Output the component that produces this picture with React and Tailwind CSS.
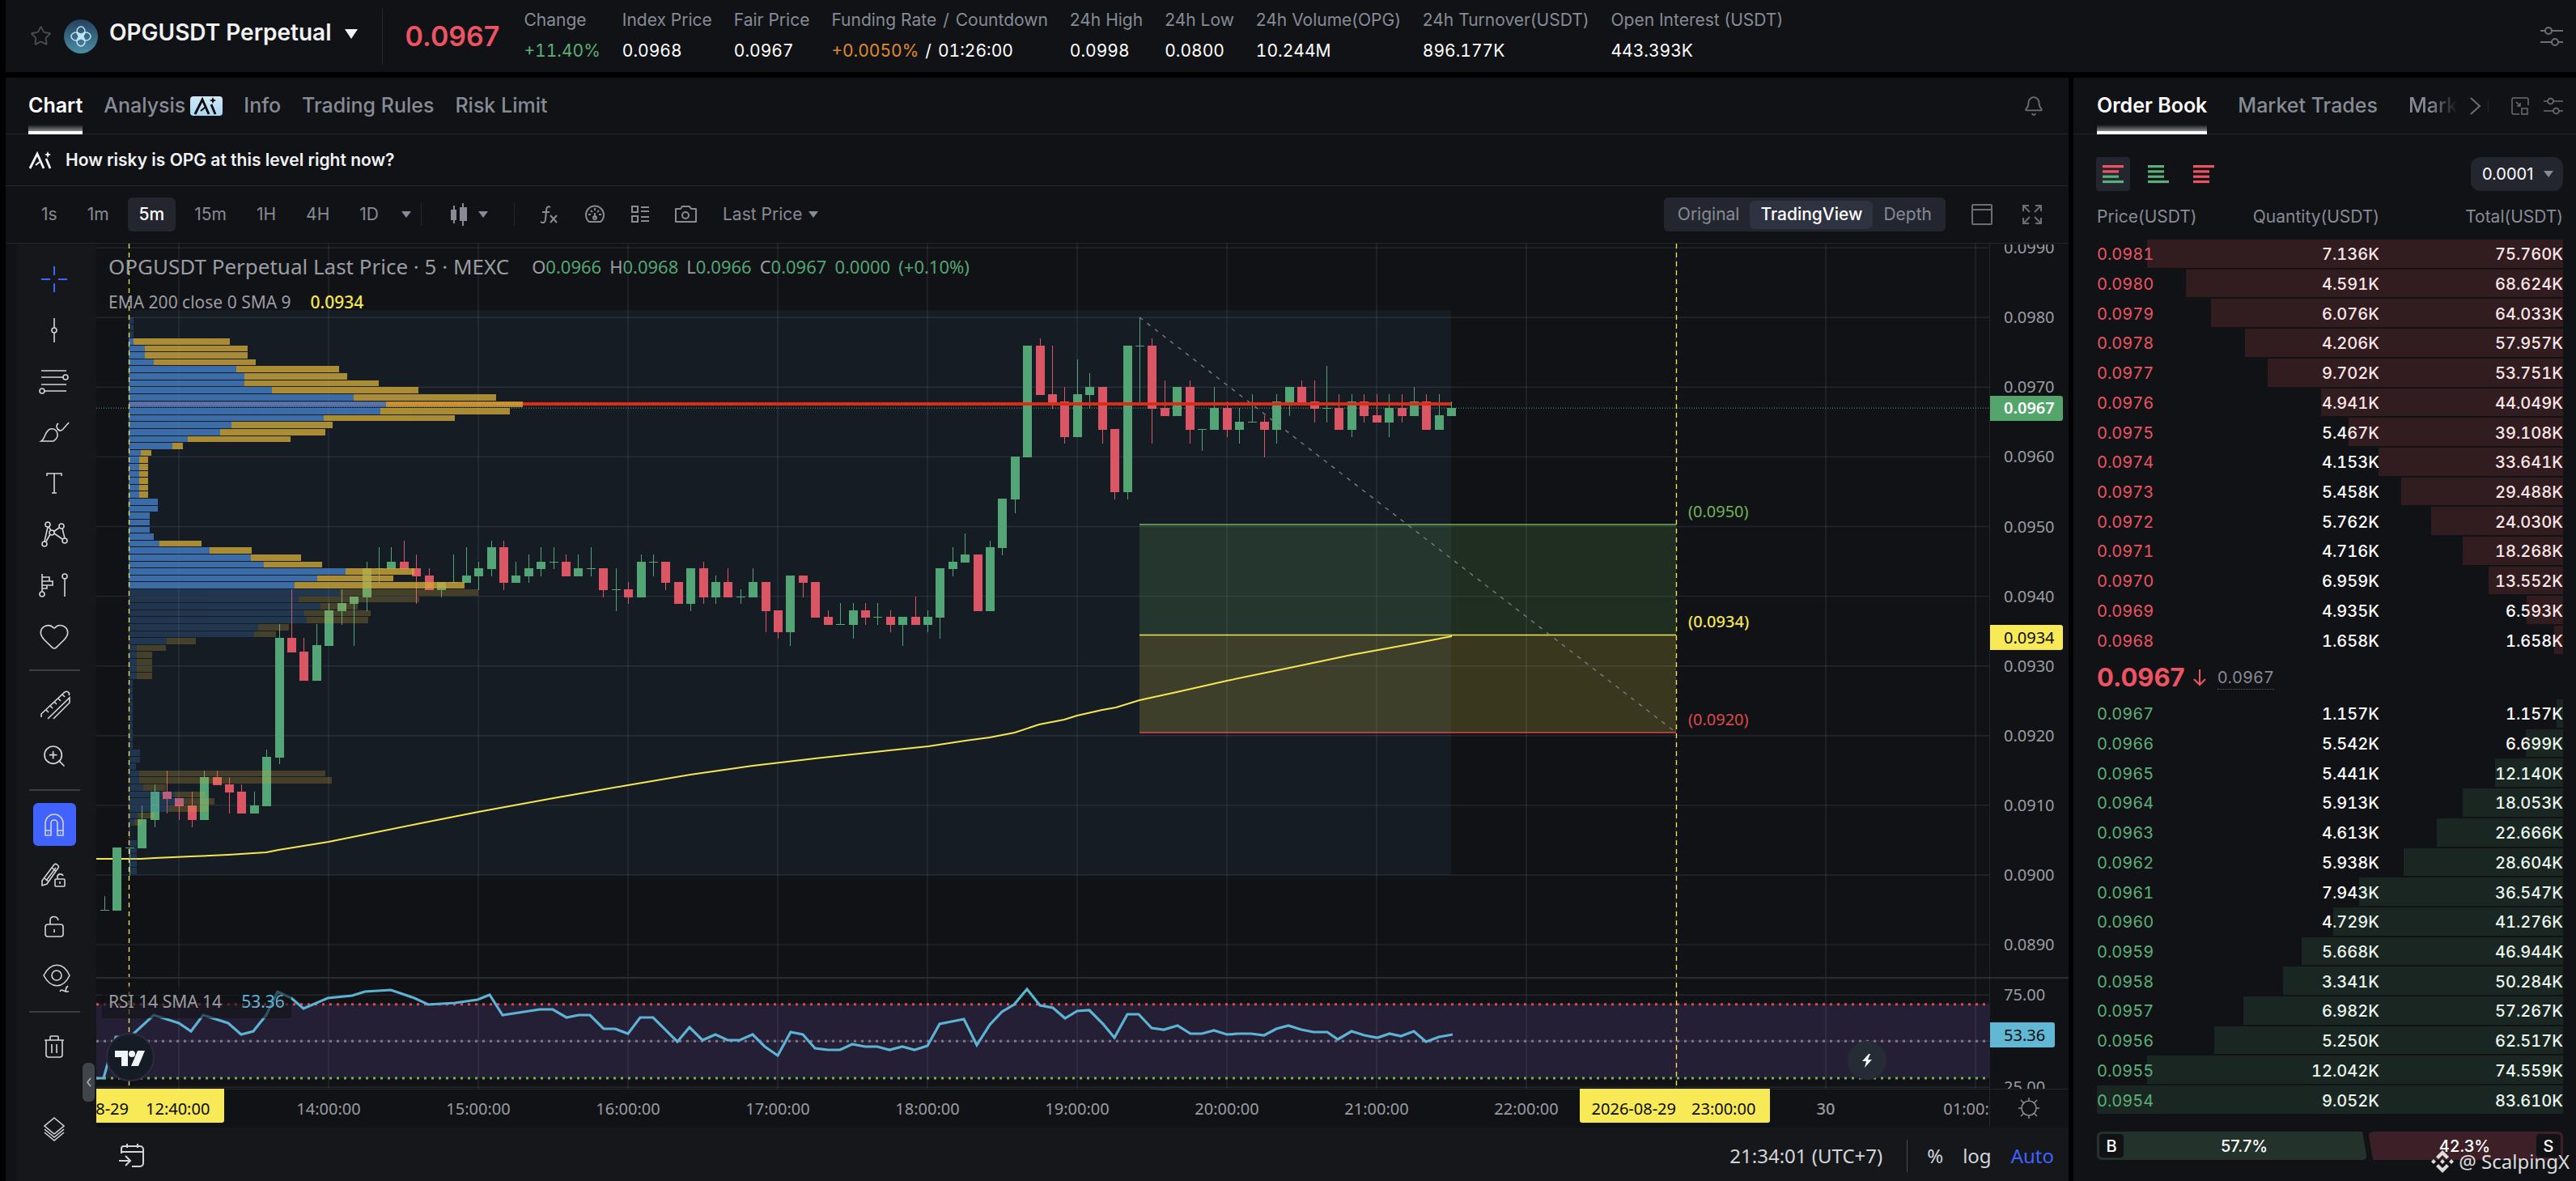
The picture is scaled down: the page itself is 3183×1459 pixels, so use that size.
import React, { useState } from 'react';
import { Bell, Heart, Star, ZoomIn } from 'lucide-react';

const stats = [
  { label: 'Change', value: '+11.40%', color: 'text-[#5ab078]' },
  { label: 'Index Price', value: '0.0968', color: 'text-white' },
  { label: 'Fair Price', value: '0.0967', color: 'text-white' },
  { label: 'Funding Rate', label2: 'Countdown', value: '+0.0050%', value2: '01:26:00', color: 'text-[#e08a2c]' },
  { label: '24h High', value: '0.0998', color: 'text-white' },
  { label: '24h Low', value: '0.0800', color: 'text-white' },
  { label: '24h Volume(OPG)', value: '10.244M', color: 'text-white' },
  { label: '24h Turnover(USDT)', value: '896.177K', color: 'text-white' },
  { label: 'Open Interest (USDT)', value: '443.393K', color: 'text-white' },
];

// [price, quantity, total]
const asks = [
  ['0.0981', '7.136K', '75.760K'],
  ['0.0980', '4.591K', '68.624K'],
  ['0.0979', '6.076K', '64.033K'],
  ['0.0978', '4.206K', '57.957K'],
  ['0.0977', '9.702K', '53.751K'],
  ['0.0976', '4.941K', '44.049K'],
  ['0.0975', '5.467K', '39.108K'],
  ['0.0974', '4.153K', '33.641K'],
  ['0.0973', '5.458K', '29.488K'],
  ['0.0972', '5.762K', '24.030K'],
  ['0.0971', '4.716K', '18.268K'],
  ['0.0970', '6.959K', '13.552K'],
  ['0.0969', '4.935K', '6.593K'],
  ['0.0968', '1.658K', '1.658K'],
];

const bids = [
  ['0.0967', '1.157K', '1.157K'],
  ['0.0966', '5.542K', '6.699K'],
  ['0.0965', '5.441K', '12.140K'],
  ['0.0964', '5.913K', '18.053K'],
  ['0.0963', '4.613K', '22.666K'],
  ['0.0962', '5.938K', '28.604K'],
  ['0.0961', '7.943K', '36.547K'],
  ['0.0960', '4.729K', '41.276K'],
  ['0.0959', '5.668K', '46.944K'],
  ['0.0958', '3.341K', '50.284K'],
  ['0.0957', '6.982K', '57.267K'],
  ['0.0956', '5.250K', '62.517K'],
  ['0.0955', '12.042K', '74.559K'],
  ['0.0954', '9.052K', '83.610K'],
];

// 5m candles from 12:30, in ticks of 0.0001: [open, high, low, close]
const candles = [
  [895, 897, 895, 895], [895, 904, 895, 904], [904, 904, 900, 904], [904, 910, 904, 908],
  [908, 913, 907, 912], [912, 915, 909, 911], [911, 911, 908, 910], [910, 912, 907, 908],
  [908, 915, 908, 914], [914, 915, 913, 913], [913, 914, 909, 912], [912, 913, 909, 909],
  [909, 912, 909, 910], [910, 918, 910, 917], [917, 936, 916, 934], [934, 941, 932, 932],
  [932, 934, 928, 928], [928, 936, 928, 933], [933, 939, 933, 938], [938, 941, 936, 939],
  [939, 940, 933, 940], [940, 945, 938, 944], [944, 947, 942, 944], [944, 947, 944, 945],
  [945, 948, 944, 944], [944, 946, 939, 943], [943, 944, 941, 941], [941, 942, 940, 942],
  [942, 946, 942, 942], [942, 947, 942, 943], [943, 945, 941, 944], [944, 948, 943, 947],
  [947, 948, 941, 942], [942, 945, 942, 943], [943, 946, 942, 944], [944, 947, 943, 945],
  [945, 947, 944, 945], [945, 946, 943, 943], [943, 946, 943, 944], [944, 947, 943, 944],
  [944, 944, 940, 941], [941, 944, 938, 941], [941, 942, 939, 940], [940, 946, 940, 945],
  [945, 946, 943, 945], [945, 945, 941, 942], [942, 942, 939, 939], [939, 944, 938, 944],
  [944, 945, 939, 940], [940, 943, 939, 942], [942, 944, 940, 940], [940, 941, 939, 940],
  [940, 944, 940, 942], [942, 942, 935, 938], [938, 938, 934, 935], [935, 943, 933, 943],
  [943, 943, 940, 942], [942, 942, 937, 937], [937, 938, 936, 936], [936, 939, 936, 936],
  [936, 939, 934, 938], [938, 939, 936, 937], [937, 939, 936, 937], [937, 938, 935, 936],
  [936, 937, 933, 937], [937, 940, 936, 936], [936, 938, 935, 937], [937, 944, 934, 944],
  [944, 947, 943, 945], [945, 949, 945, 946], [946, 946, 938, 938], [938, 948, 938, 947],
  [947, 954, 946, 954], [954, 960, 952, 960], [960, 976, 960, 976], [976, 977, 969, 969],
  [969, 976, 967, 968], [968, 970, 962, 963], [963, 974, 963, 969], [969, 972, 967, 970],
  [970, 970, 962, 964], [964, 964, 954, 955], [955, 976, 954, 976], [976, 980, 968, 976],
  [976, 977, 962, 967], [967, 971, 966, 966], [966, 970, 966, 970], [970, 971, 962, 964],
  [964, 964, 961, 964], [964, 970, 964, 967], [967, 968, 963, 964], [964, 967, 962, 965],
  [965, 969, 965, 965], [965, 966, 960, 964], [964, 969, 962, 968], [968, 970, 966, 970],
  [970, 971, 968, 968], [968, 971, 965, 967], [967, 973, 965, 967], [967, 969, 964, 964],
  [964, 969, 963, 968], [968, 969, 965, 966], [966, 969, 965, 965], [965, 969, 963, 967],
  [967, 969, 965, 966], [966, 970, 966, 968], [968, 969, 964, 964], [964, 969, 964, 966],
  [966, 968, 966, 967],
];

// volume profile, one row per tick from 0.0980 down: [up width, total width]
const profile = [
  [6, 6], [6, 6], [6, 6], [6, 125], [20, 147], [20, 147], [31, 157], [133, 260], [143, 270], [143, 309],
  [177, 358], [278, 454], [318, 487], [311, 471], [241, 403], [127, 252], [113, 243], [73, 200], [54, 67], [15, 28],
  [13, 24], [13, 24], [13, 24], [13, 24], [13, 24], [13, 24], [36, 36], [36, 36], [26, 26], [26, 26],
  [26, 26], [31, 31], [38, 90], [100, 152], [151, 213], [167, 239], [268, 353], [233, 327], [205, 415], [261, 432],
  [210, 359], [237, 283], [217, 299], [220, 296], [160, 198], [155, 182], [47, 83], [10, 46], [10, 29], [10, 29],
  [10, 29], [10, 29], [5, 5], [5, 5], [5, 5], [5, 5], [5, 5], [5, 5], [5, 5], [5, 5],
  [5, 5], [5, 5], [14, 14], [14, 14], [9, 9], [13, 243], [13, 251], [18, 46], [57, 94], [68, 106],
  [49, 99], [11, 32], [7, 16], [2, 2], [2, 2], [10, 10], [10, 10], [10, 10], [10, 10], [10, 10],
];

const emaPoints =
  '119,1061 174,1061 191,1060 236,1058 282,1056 313,1054 329,1053 344,1050 406,1040 515,1018 591,1003 684,986 776,970 853,957 930,946 1007,937 1099,927 1147,922 1193,915 1208,913 1223,911 1254,905 1284,895 1315,889 1331,884 1362,877 1379,874 1408,865 1454,855 1516,841 1608,822 1670,809 1747,795 1794,786';

const rsiPoints =
  '119,1332 128,1332 133,1314 143,1281 159,1281 164,1278 190,1254 221,1264 236,1274 251,1254 282,1264 298,1278 313,1274 329,1254 343,1225 360,1233 375,1246 405,1233 435,1230 451,1225 483,1223 512,1233 529,1241 562,1239 590,1235 605,1229 621,1254 667,1247 683,1247 700,1257 715,1254 729,1254 746,1271 760,1271 776,1277 791,1257 807,1257 837,1287 852,1269 868,1285 884,1278 899,1285 914,1285 930,1278 945,1293 961,1304 977,1275 992,1278 1007,1295 1023,1297 1038,1297 1053,1290 1069,1293 1084,1293 1099,1297 1115,1293 1130,1297 1146,1292 1161,1265 1191,1259 1207,1291 1223,1266 1238,1250 1253,1241 1269,1222 1285,1242 1301,1245 1316,1258 1331,1249 1346,1248 1363,1265 1377,1282 1393,1253 1407,1253 1423,1270 1438,1272 1455,1267 1471,1277 1485,1277 1500,1273 1516,1278 1530,1277 1546,1277 1562,1279 1577,1271 1592,1267 1608,1272 1623,1275 1640,1275 1653,1284 1670,1274 1686,1279 1702,1282 1717,1277 1731,1280 1747,1274 1762,1287 1778,1281 1795,1278';

const priceLabels = [990, 980, 970, 960, 950, 940, 930, 920, 910, 900, 890];
const hourLabels = ['', '14:00:00', '15:00:00', '16:00:00', '17:00:00', '18:00:00', '19:00:00', '20:00:00', '21:00:00', '22:00:00', '', '30', '01:00:00'];

const candleX = (i) => 128.9 + i * 15.41;
const hourX = (h) => Math.round(221.4 + h * 184.93);
const priceY = (p) => 392.2 + (980 - p) * 8.61;
const rsiY = (v) => 1229.3 + (75 - v) * 2.28;

const Caret = ({ className = 'w-3 h-2' }) => (
  <svg className={className} viewBox="0 0 12 8" preserveAspectRatio="none" fill="currentColor" aria-hidden="true">
    <path d="M0 0h12L6 8z" />
  </svg>
);

const SlidersIcon = ({ size = 28 }) => (
  <svg width={size} height={size} viewBox="0 0 28 28" fill="none" stroke="currentColor" strokeWidth="2" aria-hidden="true">
    <circle cx="10" cy="7" r="4" />
    <path d="M0 7h6M14 7h14" />
    <circle cx="18" cy="21" r="4" />
    <path d="M0 21h14M22 21h6" />
  </svg>
);

const AiMark = () => (
  <svg width="32" height="22" viewBox="0 0 32 22" fill="none" stroke="currentColor" strokeWidth="2.8" aria-hidden="true">
    <polyline points="2,21 11,3 19,21" />
    <line x1="9" y1="17" x2="14" y2="13" strokeWidth="2" />
    <line x1="22" y1="9" x2="27" y2="21" />
    <path d="M24 0l1.2 2.8L28 4l-2.8 1.2L24 8l-1.2-2.8L20 4l2.8-1.2z" fill="currentColor" stroke="none" />
  </svg>
);

const ToolIcon = ({ children }) => (
  <svg width="42" height="42" viewBox="0 0 42 42" fill="none" stroke="currentColor" strokeWidth="1.6" aria-hidden="true">
    {children}
  </svg>
);

const drawTools = [
  {
    name: 'Cross', color: 'text-[#3f63ff]',
    icon: <path strokeWidth="2" d="M21 5v11M21 26v11M5 21h11M26 21h11" />,
  },
  {
    name: 'Trend line',
    icon: <><path d="M21 6v12M21 24v12" /><circle cx="21" cy="21" r="3" /></>,
  },
  {
    name: 'Fib retracement',
    icon: <><path d="M5 8h31M5 16h27M5 25h31M9 33h27" /><circle cx="35" cy="16" r="3" /><circle cx="6" cy="33" r="3" /></>,
  },
  {
    name: 'Brush',
    icon: <><path d="M5 32c5-3 4-12 11-15 9-2 13 10 4 15z" /><path d="M26 10c-4 3-1 9 3 9 1 0 2-1 3-2l7-8" /></>,
  },
  {
    name: 'Text',
    icon: <path d="M12 12V9h18v3M21 9v24M18 33h6" />,
  },
  {
    name: 'Patterns',
    icon: (
      <>
        <path d="M13 12L9 30M14 12l3 4M20 18l7-5M16 21l-5 9M21 20l10 7M31 14l3 12" />
        <circle cx="13" cy="9" r="3" /><circle cx="30" cy="11" r="3" /><circle cx="18" cy="19" r="3" />
        <circle cx="9" cy="33" r="3" /><circle cx="34" cy="29" r="3" />
      </>
    ),
  },
  {
    name: 'Forecast',
    icon: (
      <>
        <path d="M6 7v22M6 11h9v5h4v5H6M6 16h9M12 21v4H6" />
        <circle cx="6" cy="32" r="3" /><circle cx="34" cy="10" r="3" />
        <path d="M34 13v22" />
      </>
    ),
  },
  { name: 'Favorites', lucide: <Heart size={40} strokeWidth={1} /> },
];

const measureTools = [
  {
    name: 'Measure',
    icon: (
      <>
        <path d="M5 36v-4L34 5c3-2 7 1 5 4" />
        <path d="M13 38L40 12v6L20 38" />
        <path d="M11 27l3 3M16 22l3 3M21 17l3 3M26 13l3 3M31 8l3 3" />
      </>
    ),
  },
  { name: 'Zoom in', lucide: <ZoomIn size={32} strokeWidth={1.3} /> },
];

const lockTools = [
  {
    name: 'Magnet', active: true,
    icon: (
      <>
        <path d="M10 34V19a11 11 0 0 1 22 0v15h-7V19a4 4 0 0 0-8 0v15z" />
        <path d="M10 28h7M25 28h7M13 31h1M28 31h1" />
      </>
    ),
  },
  {
    name: 'Stay in drawing mode',
    icon: (
      <>
        <path d="M6 27L21 7c2-2 7 2 5 4L12 31l-6 2zM9 24l5 4M18 11l5 4M11 27L23 11" />
        <rect x="22" y="25" width="12" height="9" rx="1" />
        <path d="M25 25v-3c0-4 6-4 7-1M28 28v3" />
      </>
    ),
  },
  {
    name: 'Lock drawings',
    icon: (
      <>
        <rect x="10" y="18" width="22" height="15" rx="3" />
        <path d="M16 18v-5c0-6 9-6 10 0M21 24v4" />
      </>
    ),
  },
  {
    name: 'Hide drawings',
    icon: (
      <>
        <path d="M8 18c9-17 24-17 32 0-8 17-23 17-32 0z" />
        <circle cx="24" cy="18" r="6" />
        <path d="M28 38c2-5 5 1 7-1 1-1-1-3 3-6M34 38h5" />
      </>
    ),
  },
];

const ToolButton = ({ tool }) => (
  <button aria-label={tool.name} className={`flex h-[63px] w-full items-center justify-center ${tool.color || 'text-[#d3d5da]'}`}>
    <span className={tool.active ? 'flex h-[53px] w-[53px] items-center justify-center rounded-md bg-[#4062ff]' : 'flex'}>
      {tool.lucide ? tool.lucide : <ToolIcon>{tool.icon}</ToolIcon>}
    </span>
  </button>
);

const ToolDivider = () => <div className="my-[10px] h-[2px] w-[63px] bg-[#3b3d42]" />;

const MarketHeader = () => (
  <header className="flex h-[89px] items-center bg-[#111215] pl-[30px] pr-4">
    <button aria-label="Add to favorites" className="text-[#4a4d55]">
      <Star size={27} strokeWidth={1.6} />
    </button>
    <svg className="ml-[15px] h-[42px] w-[42px]" viewBox="0 0 42 42" fill="none" stroke="#bfe4f5" strokeWidth="1.5" aria-hidden="true">
      <defs>
        <linearGradient id="coin" x1="0" y1="0" x2="0" y2="1">
          <stop offset="0" stopColor="#27405f" />
          <stop offset="1" stopColor="#4a8fa5" />
        </linearGradient>
      </defs>
      <circle cx="21" cy="21" r="21" fill="url(#coin)" stroke="none" />
      <ellipse cx="21" cy="15" rx="5" ry="6" /><ellipse cx="21" cy="27" rx="5" ry="6" />
      <ellipse cx="15" cy="21" rx="6" ry="5" /><ellipse cx="27" cy="21" rx="6" ry="5" />
      <path d="M17 17l8 8M25 17l-8 8" />
      <circle cx="21" cy="21" r="3" />
    </svg>
    <button className="ml-3.5 flex items-center gap-4 pb-2.5 text-[28px] leading-10 font-semibold text-[#f2f3f5]">
      OPGUSDT Perpetual
      <Caret className="mt-1 h-3 w-4" />
    </button>
    <div className="ml-[30px] h-[70px] w-px bg-[#24262b]" />
    <div className="ml-7 text-[34px] leading-10 font-semibold text-[#ec5463]">0.0967</div>
    <dl className="ml-[30px] flex gap-[27px] pb-0.5 text-[21px]">
      {stats.map((s) => (
        <div key={s.label} className="whitespace-nowrap">
          <dt className="mb-2.5 leading-7 text-[#868b95]">
            {s.label}
            {s.label2 && <><span className="mx-2">/</span>{s.label2}</>}
          </dt>
          <dd className={`leading-7 tabular-nums ${s.color}`}>
            {s.value}
            {s.value2 && <span className="text-white"><span className="mx-2">/</span>{s.value2}</span>}
          </dd>
        </div>
      ))}
    </dl>
    <button aria-label="Layout settings" className="ml-auto text-[#6b6e76]">
      <SlidersIcon />
    </button>
  </header>
);

const Tab = ({ active, children }) => (
  <button className={`relative flex h-full items-center whitespace-nowrap ${active ? 'font-semibold text-white' : 'font-medium text-[#868b95]'}`}>
    {children}
    {active && (
      <span className="absolute inset-x-0 bottom-[-1px] h-3 border-b-4 border-white bg-linear-to-t from-white/50 to-transparent" />
    )}
  </button>
);

const ChartTabs = () => (
  <nav className="flex h-[70px] items-center gap-[26px] border-b border-[#24262b] pl-7 pr-[30px] text-[25px]">
    <Tab active>Chart</Tab>
    <Tab>
      Analysis
      <span className="ml-1.5 flex h-6 w-10 items-center justify-center rounded bg-linear-to-b from-[#cfeaf8] to-[#a9d6f2] text-black">
        <AiMark />
      </span>
    </Tab>
    <Tab>Info</Tab>
    <Tab>Trading Rules</Tab>
    <Tab>Risk Limit</Tab>
    <button aria-label="Price alerts" className="ml-auto text-[#6b6e76]">
      <Bell size={26} strokeWidth={1.7} />
    </button>
  </nav>
);

const ChartToolbar = () => {
  const [interval, setInterval] = useState('5m');
  const [view, setView] = useState('TradingView');
  return (
    <div className="flex h-[71px] items-center border-b border-[#24262b] pl-[30px] pr-8 text-[21px] text-[#868b95]">
      <div className="flex gap-[9px]">
        {['1s', '1m', '5m', '15m', '1H', '4H', '1D'].map((t) => (
          <button
            key={t}
            onClick={() => setInterval(t)}
            className={`h-[42px] rounded-md px-3.5 ${t === interval ? 'bg-[#24262f] font-medium text-white' : ''}`}
          >
            {t}
          </button>
        ))}
      </div>
      <button aria-label="More intervals" className="ml-3.5"><Caret /></button>
      <div className="ml-3 h-7 w-px bg-[#24262b]" />
      <button aria-label="Chart type" className="ml-9 flex items-center gap-3.5">
        <svg width="20" height="28" viewBox="0 0 20 28" fill="currentColor" stroke="currentColor" aria-hidden="true">
          <path d="M4 3v22M15 0v28" strokeWidth="2" />
          <rect x="0" y="8" width="7" height="13" stroke="none" />
          <rect x="11" y="5" width="9" height="17" stroke="none" />
        </svg>
        <Caret />
      </button>
      <div className="ml-8 h-7 w-px bg-[#24262b]" />
      <div className="ml-[30px] flex items-center gap-8">
        <button aria-label="Indicators">
          <svg width="24" height="24" viewBox="0 0 24 24" fill="none" stroke="currentColor" strokeWidth="2" aria-hidden="true">
            <path d="M14 3c-3-2-5 0-5 4l-1 11c0 4-3 5-6 3M4 9h9" />
            <path d="M14 13l8 9M22 13l-8 9" />
          </svg>
        </button>
        <button aria-label="Sentiment">
          <svg width="26" height="24" viewBox="0 0 26 24" fill="none" stroke="currentColor" strokeWidth="2" aria-hidden="true">
            <path d="M6 21a11 11 0 1 1 14 0z" />
            <path d="M13 4v3M5 12h3M18 12h3M8 7l2 2M18 7l-2 2M13 10v6" />
            <circle cx="13" cy="16" r="2" />
          </svg>
        </button>
        <button aria-label="Drawing templates">
          <svg width="22" height="22" viewBox="0 0 22 22" fill="none" stroke="currentColor" strokeWidth="2" aria-hidden="true">
            <rect x="1" y="1" width="7" height="7" /><rect x="1" y="13" width="7" height="7" />
            <path d="M12 2h10M12 7h10M12 14h10M12 19h10" />
          </svg>
        </button>
        <button aria-label="Screenshot">
          <svg width="27" height="24" viewBox="0 0 27 24" fill="none" stroke="currentColor" strokeWidth="2" aria-hidden="true">
            <path d="M1 5h6l2-3h9l2 3h6v16H1z" strokeLinejoin="round" />
            <circle cx="13" cy="13" r="4" />
          </svg>
        </button>
        <span className="relative flex items-center">
          <select aria-label="Price type" className="w-[118px] appearance-none bg-transparent">
            <option>Last Price</option>
            <option>Fair Price</option>
            <option>Index Price</option>
          </select>
          <Caret className="pointer-events-none absolute right-0 h-2 w-3" />
        </span>
      </div>
      <div className="ml-auto flex h-[42px] items-center rounded-md bg-[#24262f] px-1">
        {['Original', 'TradingView', 'Depth'].map((v) => (
          <button
            key={v}
            onClick={() => setView(v)}
            className={`h-[35px] rounded-md px-[13px] ${v === view ? 'bg-[#2f3240] font-medium text-white' : ''}`}
          >
            {v}
          </button>
        ))}
      </div>
      <button aria-label="Split view" className="ml-8">
        <svg width="26" height="26" viewBox="0 0 26 26" fill="none" stroke="#6b6e76" strokeWidth="2" aria-hidden="true">
          <rect x="1" y="1" width="24" height="24" rx="1" />
          <path d="M1 7h24" />
        </svg>
      </button>
      <button aria-label="Full screen" className="ml-9">
        <svg width="26" height="26" viewBox="0 0 26 26" fill="none" stroke="#6b6e76" strokeWidth="2" aria-hidden="true">
          <path d="M2 9V2h7M2 2l8 8M17 2h7v7M24 2l-8 8M2 17v7h7M2 24l8-8M24 17v7h-7M24 24l-8-8" />
        </svg>
      </button>
    </div>
  );
};

const PriceChart = () => (
  <svg viewBox="119 301 2437 1092" className="block h-auto w-full bg-[#111215] font-['Noto_Sans',sans-serif] text-xl">
    <defs>
      <clipPath id="plot"><rect x="119" y="301" width="2339" height="1092" /></clipPath>
      <clipPath id="panes"><rect x="119" y="302" width="2437" height="1043" /></clipPath>
    </defs>

    <g clipPath="url(#plot)">
      <rect x="159" y="383" width="1634" height="698" fill="#151c24" />
      <rect x="119" y="1240" width="2339" height="92" fill="#251f36" />

      <g stroke="#b4bee6" strokeOpacity="0.12" strokeWidth="1.4">
        {hourLabels.map((l, h) => <line key={h} x1={hourX(h)} x2={hourX(h)} y1="301" y2="1345" />)}
        {priceLabels.map((p) => <line key={p} x1="119" x2="2458" y1={priceY(p)} y2={priceY(p)} />)}
        <line x1="119" x2="2458" y1={rsiY(75)} y2={rsiY(75)} />
        <line x1="119" x2="2458" y1={rsiY(50)} y2={rsiY(50)} />
        <line x1="119" x2="2458" y1={rsiY(25)} y2={rsiY(25)} />
      </g>

      {/* position range */}
      <rect x="1408" y="648" width="663" height="136" fill="#6ab25a" fillOpacity="0.18" />
      <rect x="1408" y="784" width="663" height="121" fill="#fae650" fillOpacity="0.18" />

      <polyline points={emaPoints} fill="none" stroke="#f5e652" strokeWidth="2" />

      {candles.map(([o, h, l, c], i) => {
        const color = c >= o && i !== 5 ? '#53a575' : '#db5664';
        const x = Math.round(candleX(i));
        return (
          <g key={i} fill={color} shapeRendering="crispEdges">
            <rect x={x - 0.5} y={priceY(h)} width="1" height={(h - l) * 8.61 + 1} />
            <rect x={x - 5.5} y={priceY(Math.max(o, c))} width="11" height={Math.abs(o - c) * 8.61 + 1} />
          </g>
        );
      })}

      <line x1="1408" y1="648" x2="2071" y2="648" stroke="#6fb457" strokeWidth="1.4" />
      <line x1="1408" y1="784.5" x2="2071" y2="784.5" stroke="#f5e652" strokeWidth="1.4" />
      <line x1="1408" y1="905" x2="2071" y2="905" stroke="#dc4a48" strokeWidth="1.4" />
      <line x1="1408" y1="392" x2="2071" y2="905" stroke="#787b86" strokeWidth="1.4" strokeDasharray="5 7" />

      <line x1="119" y1={priceY(967)} x2="2458" y2={priceY(967)} stroke="#53a575" strokeDasharray="1 2" />
      <line x1="159" y1="499" x2="1793" y2="499" stroke="#dc2c18" strokeWidth="4" />

      {profile.map(([up, total], k) => {
        const bright = k >= 3 && k < 39;
        return (
          <g key={k} opacity={bright ? 0.8 : 0.26} shapeRendering="crispEdges">
            <rect x="159" y={priceY(980 - k)} width={up} height="7.6" fill="#4681c9" />
            <rect x={159 + up} y={priceY(980 - k)} width={total - up} height="7.6" fill="#d0a839" />
          </g>
        );
      })}

      <line x1="119" x2="2458" y1={rsiY(70)} y2={rsiY(70)} stroke="#de4a4a" strokeWidth="3" strokeDasharray="3 6" />
      <line x1="119" x2="2458" y1={rsiY(50)} y2={rsiY(50)} stroke="#7d7a85" strokeWidth="3" strokeDasharray="3 6" />
      <line x1="119" x2="2458" y1={rsiY(30)} y2={rsiY(30)} stroke="#6cb257" strokeWidth="3" strokeDasharray="3 6" />
      <polyline points={rsiPoints} fill="none" stroke="#5cb3d3" strokeWidth="3.2" />

      <g stroke="#f5e652" strokeWidth="1.3" strokeDasharray="6 5">
        <line x1="159.5" y1="301" x2="159.5" y2="1345" />
        <line x1="2071.5" y1="301" x2="2071.5" y2="1345" />
      </g>

      <text x="2086" y="639" fill="#6fb457">(0.0950)</text>
      <text x="2086" y="775" fill="#f5e652" fontWeight="500">(0.0934)</text>
      <text x="2086" y="896" fill="#dc4a48">(0.0920)</text>

      {/* time axis */}
      <g textAnchor="middle" fill="#9a9ca3">
        {hourLabels.map((l, h) => <text key={h} x={hourX(h)} y="1377" fontWeight={l === '30' ? 500 : 400}>{l}</text>)}
      </g>
      <rect x="42" y="1345" width="235" height="42" rx="3" fill="#f8e957" />
      <rect x="1952" y="1345" width="235" height="42" rx="3" fill="#f8e957" />
      <g fill="#0b0b0b">
        <text x="159" y="1377" textAnchor="end">2026-08-29</text>
        <text x="180" y="1377">12:40:00</text>
        <text x="2071" y="1377" textAnchor="end">2026-08-29</text>
        <text x="2090" y="1377">23:00:00</text>
      </g>
    </g>

    {/* price scale */}
    <g clipPath="url(#panes)" fill="#9a9ca3">
      {priceLabels.map((p) => (
        <text key={p} x="2476" y={priceY(p) + 7}>{(p / 10000).toFixed(4)}</text>
      ))}
      <text x="2476" y={rsiY(75) + 7}>75.00</text>
      <text x="2476" y={rsiY(25) + 7}>25.00</text>
    </g>
    <path d="M2458 489h88a3 3 0 0 1 3 3v25a3 3 0 0 1-3 3h-88z" fill="#53a56c" />
    <text x="2476" y="511" fill="#fff" fontWeight="600">0.0967</text>
    <path d="M2458 772h88a3 3 0 0 1 3 3v25a3 3 0 0 1-3 3h-88z" fill="#f8e957" />
    <text x="2476" y="795" fill="#0b0b0b">0.0934</text>
    <path d="M2458 1263h78a3 3 0 0 1 3 3v25a3 3 0 0 1-3 3h-78z" fill="#60b8d4" />
    <text x="2476" y="1286" fill="#0b0b0b">53.36</text>

    <path d="M2458.5 301v1092M119 1345.5h2437" stroke="#222429" fill="none" />
    <path d="M119 1208h2437" stroke="#2a2c30" strokeWidth="2" fill="none" />
    <rect x="42" y="1345" width="235" height="2" fill="#f8e957" clipPath="url(#plot)" />
    <rect x="1952" y="1345" width="235" height="2" fill="#f8e957" />

    {/* axis settings */}
    <g transform="translate(2507 1369)" fill="none" stroke="#8b8e96" strokeWidth="1.5">
      <circle r="9" />
      <path d="M0-9v-4M0 9v4M9 0h4M-9 0h-4M6 6l4 4M-6 6l-4 4M6-6l4-4M-6-6l-4-4" />
    </g>

    <circle cx="2307" cy="1310" r="24" fill="#262c35" />
    <path d="M2309 1302l-8 9h5l-2 8 9-10h-5l3-7z" fill="#f1f5fa" />

    <circle cx="161" cy="1306" r="29" fill="#151c26" stroke="#30293f" strokeWidth="2" />
    <g fill="#f1f5f9">
      <path d="M142 1298h16v19h-8v-11h-8z" />
      <circle cx="163" cy="1302" r="4" />
      <path d="M170 1298h9l-8 19h-9z" />
    </g>
  </svg>
);

const ohlc = [['O', '0.0966'], ['H', '0.0968'], ['L', '0.0966'], ['C', '0.0967']];

const ChartLegend = () => (
  <div className="pointer-events-none absolute left-[15px] top-3 font-['Noto_Sans',sans-serif] text-[21px] text-[#9a9ca3]">
    <div className="flex items-center gap-7">
      <span className="text-[26px] leading-8">OPGUSDT Perpetual Last Price · 5 · MEXC</span>
      <span className="flex gap-2.5 text-[22px] leading-8 text-[#53a575]">
        {ohlc.map(([k, v]) => (
          <span key={k}><span className="text-[#9a9ca3]">{k}</span>{v}</span>
        ))}
        <span>0.0000</span>
        <span>(+0.10%)</span>
      </span>
    </div>
    <div className="mt-2 flex items-center gap-6 leading-10">
      <span>EMA 200 close 0 SMA 9</span>
      <span className="font-medium text-[#f5e652]">0.0934</span>
    </div>
  </div>
);

const ChartFooter = () => (
  <div className="flex flex-1 items-center bg-[#16171b] pt-1 pl-7 pr-4.5 font-['Noto_Sans',sans-serif] text-2xl text-[#d3d5da]">
    <button aria-label="Go to date">
      <svg width="32" height="30" viewBox="0 0 32 30" fill="none" stroke="currentColor" strokeWidth="2" aria-hidden="true">
        <path d="M3 12V6a3 3 0 0 1 3-3h20a4 4 0 0 1 4 4v17a4 4 0 0 1-4 4H16M3 10h27M10 0v5M23 0v5" />
        <path d="M0 21h13M8 15l6 6-6 6" />
      </svg>
    </button>
    <button className="ml-auto">21:34:01 (UTC+7)</button>
    <div className="ml-[30px] h-10 w-px bg-[#4a4b50]" />
    <button className="ml-6">%</button>
    <button className="ml-6">log</button>
    <button className="ml-6 text-[#3f63ff]">Auto</button>
  </div>
);

const DepthTable = ({ rows, side, max }) => (
  <table className="h-[514px] w-full table-fixed text-xl leading-7 tabular-nums">
    <tbody>
      {rows.map(([price, qty, total]) => (
        <tr key={price} className="relative">
          <td className={`p-0 ${side === 'ask' ? 'text-[#ec5463]' : 'text-[#5ab078]'}`}>{price}</td>
          <td className="w-[227px] p-0 text-right font-medium text-white">{qty}</td>
          <td className="w-[227px] p-0 text-right font-medium text-white">
            {total}
            <div
              className={`absolute right-0 top-0 bottom-[2px] ${side === 'ask' ? 'bg-[#ec5463]/15' : 'bg-[#5ab078]/13'}`}
              style={{ width: `${(parseFloat(total) / max) * 100}%` }}
            />
          </td>
        </tr>
      ))}
    </tbody>
  </table>
);

const BookIcon = ({ colors }) => (
  <svg width="26" height="23" viewBox="0 0 26 23" aria-hidden="true">
    {colors.map(([fill, w], i) => <rect key={i} x="0" y={i * 6.3} width={w} height="3.2" fill={fill} />)}
  </svg>
);

const R = '#ec5463';
const G = '#5ab078';

const OrderBook = () => (
  <section className="flex w-[621px] shrink-0 flex-col bg-[#111215]">
    <nav className="flex h-[70px] items-center border-b border-[#24262b] pl-[29px] pr-4 text-[25px]">
      <div className="flex h-full gap-[38px]">
        <Tab active>Order Book</Tab>
        <Tab>Market Trades</Tab>
        <div className="[mask-image:linear-gradient(to_right,black_45%,transparent)]">
          <Tab>Mark</Tab>
        </div>
      </div>
      <div className="ml-auto flex items-center text-[#6b6e76]">
        <button aria-label="Next tab">
          <svg width="14" height="22" viewBox="0 0 14 22" fill="none" stroke="currentColor" strokeWidth="2" aria-hidden="true">
            <path d="M1 1l11 10L1 21" />
          </svg>
        </button>
        <div className="ml-2 h-4 w-px bg-[#24262b]" />
        <button aria-label="Pop out" className="ml-7">
          <svg width="22" height="22" viewBox="0 0 22 22" fill="none" stroke="currentColor" strokeWidth="1.5" aria-hidden="true">
            <path d="M10 21H3a2 2 0 0 1-2-2V3a2 2 0 0 1 2-2h16a2 2 0 0 1 2 2v7M6 6l5 5M11 7v4H7" />
            <rect x="13" y="14" width="7" height="7" />
          </svg>
        </button>
        <button aria-label="Order book settings" className="ml-[18px]"><SlidersIcon size={24} /></button>
      </div>
    </nav>

    <div className="mt-7 flex items-center gap-3.5 pl-7 pr-4">
      <button aria-label="Full book" className="flex h-[42px] w-[42px] items-center justify-center rounded bg-[#24262f]">
        <BookIcon colors={[[R, 26], [R, 20], [G, 20], [G, 26]]} />
      </button>
      <button aria-label="Bids only" className="flex h-[42px] w-[42px] items-center justify-center">
        <BookIcon colors={[[G, 20], [G, 20], [G, 20], [G, 26]]} />
      </button>
      <button aria-label="Asks only" className="flex h-[42px] w-[42px] items-center justify-center">
        <BookIcon colors={[[R, 26], [R, 20], [R, 20], [R, 20]]} />
      </button>
      <span className="relative ml-auto flex items-center">
        <select aria-label="Price grouping" className="h-[42px] w-[114px] appearance-none rounded-xl bg-[#24262f] pl-3.5 text-xl text-white">
          <option>0.0001</option>
          <option>0.001</option>
        </select>
        <Caret className="pointer-events-none absolute right-3 h-2 w-3 text-[#868b95]" />
      </span>
    </div>

    <div className="pl-[29px] pr-4">
      <div className="mt-[18px] mb-[14px] flex text-[21px] leading-7 text-[#868b95]">
        <span className="w-[122px]">Price(USDT)</span>
        <span className="flex-1 text-right">Quantity(USDT)</span>
        <span className="w-[227px] text-right">Total(USDT)</span>
      </div>
      <DepthTable rows={asks} side="ask" max={84.86} />
      <div className="flex h-[54px] items-center text-[#ec5463]">
        <span className="text-[31px] font-bold">0.0967</span>
        <svg className="ml-2.5" width="16" height="22" viewBox="0 0 16 22" fill="none" stroke="currentColor" strokeWidth="2" aria-hidden="true">
          <path d="M8 1v19M1 13l7 7 7-7" />
        </svg>
        <span className="ml-3.5 border-b border-dotted border-[#868b95]/60 text-xl leading-7 text-[#868b95] tabular-nums">0.0967</span>
      </div>
      <DepthTable rows={bids} side="bid" max={83.61} />

      <div className="mt-5 flex h-[35px] gap-px text-xl font-medium text-white">
        <div className="flex w-[58%] items-center rounded-md bg-[#23322b] p-[3px] [clip-path:polygon(0_0,calc(100%-6px)_0,100%_100%,0_100%)]">
          <span className="flex h-full w-[30px] items-center justify-center rounded-sm bg-[#111215]">B</span>
          <span className="flex-1 text-center">57.7%</span>
        </div>
        <div className="flex flex-1 items-center rounded-md bg-[#3d1f27] p-[3px] [clip-path:polygon(0_0,100%_0,100%_100%,6px_100%)]">
          <span className="flex-1 pl-7 text-center">42.3%</span>
          <span className="flex h-full w-[30px] items-center justify-center rounded-sm bg-[#111215]">S</span>
        </div>
      </div>
    </div>
  </section>
);

const Watermark = () => (
  <div className="pointer-events-none absolute bottom-2 right-2 flex items-center gap-1.5 font-['Noto_Sans',sans-serif] text-2xl text-white/85">
    <svg width="28" height="28" viewBox="0 0 28 28" fill="currentColor" aria-hidden="true">
      <path d="M14 0l8 8-3 3-5-5-5 5-3-3zM14 28l-8-8 3-3 5 5 5-5 3 3zM14 11l3 3-3 3-3-3zM3 11l3 3-3 3-3-3zM25 11l3 3-3 3-3-3z" />
    </svg>
    @ ScalpingX
  </div>
);

export default function App() {
  return (
    <div className="relative flex min-h-screen flex-col gap-[7px] bg-black pl-[7px] font-['Inter',sans-serif]">
      <MarketHeader />
      <main className="flex flex-1 gap-[6px]">
        <section className="flex min-w-0 flex-1 flex-col bg-[#111215]">
          <ChartTabs />
          <div className="flex h-16 items-center gap-3.5 border-b border-[#24262b] pl-7 text-[21px] font-semibold text-[#f2f3f5]">
            <AiMark />
            <a href="#ask">How risky is OPG at this level right now?</a>
          </div>
          <ChartToolbar />
          <div className="flex flex-1 pl-3.5">
            <aside className="relative flex w-[98px] shrink-0 flex-col items-center bg-[#16171b] pt-3 pr-1.5">
              {drawTools.map((t) => <ToolButton key={t.name} tool={t} />)}
              <ToolDivider />
              {measureTools.map((t) => <ToolButton key={t.name} tool={t} />)}
              <ToolDivider />
              {lockTools.map((t) => <ToolButton key={t.name} tool={t} />)}
              <ToolDivider />
              <ToolButton
                tool={{
                  name: 'Remove objects',
                  icon: <path d="M9 13h24M11 13v18a3 3 0 0 0 3 3h14a3 3 0 0 0 3-3V13M16 13V9a1 1 0 0 1 1-1h8a1 1 0 0 1 1 1v4M18 18v11M24 18v11" />,
                }}
              />
              <div className="mt-auto mb-8 w-full">
                <ToolButton
                  tool={{
                    name: 'Object tree',
                    icon: <path d="M21 6l12 10-12 10L9 16zM9 20l12 10 12-10M9 24l12 10 12-10" />,
                  }}
                />
              </div>
              <button aria-label="Collapse toolbar" className="absolute bottom-[98px] right-[2px] flex h-12 w-[15px] items-center justify-center rounded-md bg-[#40444b] text-[#b5b8be]">
                <svg width="6" height="12" viewBox="0 0 6 12" fill="none" stroke="currentColor" strokeWidth="1.5" aria-hidden="true">
                  <path d="M5 1L1 6l4 5" />
                </svg>
              </button>
            </aside>
            <div className="flex min-w-0 flex-1 flex-col">
              <div className="relative">
                <PriceChart />
                <ChartLegend />
                <div className="pointer-events-none absolute bottom-[135px] left-[7px] flex h-10 items-center gap-6 bg-[#111215]/60 px-2 font-['Noto_Sans',sans-serif] text-[21px] text-[#9a9ca3]">
                  <span>RSI 14 SMA 14</span>
                  <span className="text-[#5cb3d3]">53.36</span>
                </div>
              </div>
              <ChartFooter />
            </div>
          </div>
        </section>
        <OrderBook />
      </main>
      <Watermark />
    </div>
  );
}
